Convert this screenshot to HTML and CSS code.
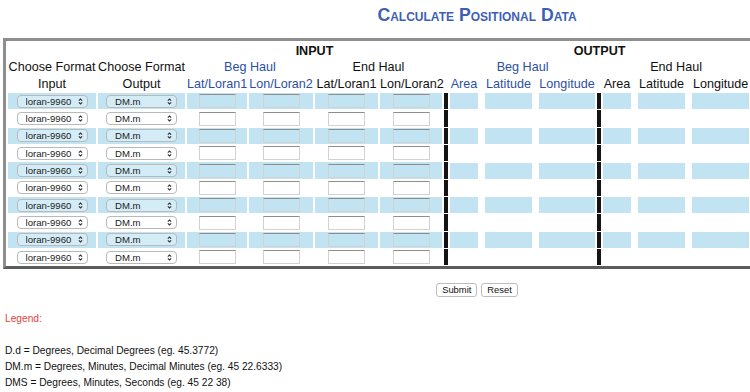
FILE: index.html
```html
<!DOCTYPE html>
<html>
<head>
<meta charset="utf-8">
<title>Calculate Positional Data</title>
<link rel="stylesheet" href="styles.css">
</head>
<body>
<div class="page">
  <h1 class="title">Calculate Positional Data</h1>
  <form class="calc">
    <table class="grid">
      <colgroup>
        <col class="w-fmt1"><col class="w-fmt2"><col class="w-c3"><col class="w-c4"><col class="w-c5"><col class="w-c6">
        <col class="w-bar">
        <col class="w-area"><col class="w-lat"><col class="w-lon1">
        <col class="w-bar">
        <col class="w-area"><col class="w-lat"><col class="w-lon2">
      </colgroup>
      <thead>
        <tr class="hrow">
          <th colspan="2"></th>
          <th colspan="4" class="grp">INPUT</th>
          <th></th>
          <th colspan="7" class="grp">OUTPUT</th>
        </tr>
        <tr class="hrow">
          <th rowspan="2" class="fmt">Choose Format<br>Input</th>
          <th rowspan="2" class="fmt">Choose Format<br>Output</th>
          <th colspan="2" class="blue">Beg Haul</th>
          <th colspan="2">End Haul</th>
          <th></th>
          <th colspan="3" class="blue">Beg Haul</th>
          <th></th>
          <th colspan="3">End Haul</th>
        </tr>
        <tr class="hrow">
          <th class="blue">Lat/Loran1</th>
          <th class="blue">Lon/Loran2</th>
          <th>Lat/Loran1</th>
          <th>Lon/Loran2</th>
          <th></th>
          <th class="blue pr">Area</th>
          <th class="blue pr">Latitude</th>
          <th class="blue">Longitude</th>
          <th></th>
          <th class="pr">Area</th>
          <th class="pr">Latitude</th>
          <th>Longitude</th>
        </tr>
      </thead>
      <tbody>
        <tr class="drow alt">
          <td class="in"><span class="sel"><select><option>loran-9960</option></select><svg class="arr" viewBox="0 0 6 10"><path d="M1 4 L3 2 L5 4 M1 6 L3 8 L5 6"/></svg></span></td>
          <td class="in"><span class="sel"><select><option>DM.m</option></select><svg class="arr" viewBox="0 0 6 10"><path d="M1 4 L3 2 L5 4 M1 6 L3 8 L5 6"/></svg></span></td>
          <td class="in"><input type="text" class="txt"></td>
          <td class="in"><input type="text" class="txt"></td>
          <td class="in"><input type="text" class="txt"></td>
          <td class="in"><input type="text" class="txt"></td>
          <td class="bar"></td>
          <td class="o pr"><div class="ob"></div></td><td class="o pr"><div class="ob"></div></td><td class="o"><div class="ob"></div></td>
          <td class="bar"></td>
          <td class="o pr"><div class="ob"></div></td><td class="o pr"><div class="ob"></div></td><td class="o"><div class="ob"></div></td>
        </tr>
        <tr class="drow">
          <td class="in"><span class="sel"><select><option>loran-9960</option></select><svg class="arr" viewBox="0 0 6 10"><path d="M1 4 L3 2 L5 4 M1 6 L3 8 L5 6"/></svg></span></td>
          <td class="in"><span class="sel"><select><option>DM.m</option></select><svg class="arr" viewBox="0 0 6 10"><path d="M1 4 L3 2 L5 4 M1 6 L3 8 L5 6"/></svg></span></td>
          <td class="in"><input type="text" class="txt"></td>
          <td class="in"><input type="text" class="txt"></td>
          <td class="in"><input type="text" class="txt"></td>
          <td class="in"><input type="text" class="txt"></td>
          <td class="bar"></td>
          <td class="o pr"><div class="ob"></div></td><td class="o pr"><div class="ob"></div></td><td class="o"><div class="ob"></div></td>
          <td class="bar"></td>
          <td class="o pr"><div class="ob"></div></td><td class="o pr"><div class="ob"></div></td><td class="o"><div class="ob"></div></td>
        </tr>
        <tr class="drow alt">
          <td class="in"><span class="sel"><select><option>loran-9960</option></select><svg class="arr" viewBox="0 0 6 10"><path d="M1 4 L3 2 L5 4 M1 6 L3 8 L5 6"/></svg></span></td>
          <td class="in"><span class="sel"><select><option>DM.m</option></select><svg class="arr" viewBox="0 0 6 10"><path d="M1 4 L3 2 L5 4 M1 6 L3 8 L5 6"/></svg></span></td>
          <td class="in"><input type="text" class="txt"></td>
          <td class="in"><input type="text" class="txt"></td>
          <td class="in"><input type="text" class="txt"></td>
          <td class="in"><input type="text" class="txt"></td>
          <td class="bar"></td>
          <td class="o pr"><div class="ob"></div></td><td class="o pr"><div class="ob"></div></td><td class="o"><div class="ob"></div></td>
          <td class="bar"></td>
          <td class="o pr"><div class="ob"></div></td><td class="o pr"><div class="ob"></div></td><td class="o"><div class="ob"></div></td>
        </tr>
        <tr class="drow">
          <td class="in"><span class="sel"><select><option>loran-9960</option></select><svg class="arr" viewBox="0 0 6 10"><path d="M1 4 L3 2 L5 4 M1 6 L3 8 L5 6"/></svg></span></td>
          <td class="in"><span class="sel"><select><option>DM.m</option></select><svg class="arr" viewBox="0 0 6 10"><path d="M1 4 L3 2 L5 4 M1 6 L3 8 L5 6"/></svg></span></td>
          <td class="in"><input type="text" class="txt"></td>
          <td class="in"><input type="text" class="txt"></td>
          <td class="in"><input type="text" class="txt"></td>
          <td class="in"><input type="text" class="txt"></td>
          <td class="bar"></td>
          <td class="o pr"><div class="ob"></div></td><td class="o pr"><div class="ob"></div></td><td class="o"><div class="ob"></div></td>
          <td class="bar"></td>
          <td class="o pr"><div class="ob"></div></td><td class="o pr"><div class="ob"></div></td><td class="o"><div class="ob"></div></td>
        </tr>
        <tr class="drow alt">
          <td class="in"><span class="sel"><select><option>loran-9960</option></select><svg class="arr" viewBox="0 0 6 10"><path d="M1 4 L3 2 L5 4 M1 6 L3 8 L5 6"/></svg></span></td>
          <td class="in"><span class="sel"><select><option>DM.m</option></select><svg class="arr" viewBox="0 0 6 10"><path d="M1 4 L3 2 L5 4 M1 6 L3 8 L5 6"/></svg></span></td>
          <td class="in"><input type="text" class="txt"></td>
          <td class="in"><input type="text" class="txt"></td>
          <td class="in"><input type="text" class="txt"></td>
          <td class="in"><input type="text" class="txt"></td>
          <td class="bar"></td>
          <td class="o pr"><div class="ob"></div></td><td class="o pr"><div class="ob"></div></td><td class="o"><div class="ob"></div></td>
          <td class="bar"></td>
          <td class="o pr"><div class="ob"></div></td><td class="o pr"><div class="ob"></div></td><td class="o"><div class="ob"></div></td>
        </tr>
        <tr class="drow">
          <td class="in"><span class="sel"><select><option>loran-9960</option></select><svg class="arr" viewBox="0 0 6 10"><path d="M1 4 L3 2 L5 4 M1 6 L3 8 L5 6"/></svg></span></td>
          <td class="in"><span class="sel"><select><option>DM.m</option></select><svg class="arr" viewBox="0 0 6 10"><path d="M1 4 L3 2 L5 4 M1 6 L3 8 L5 6"/></svg></span></td>
          <td class="in"><input type="text" class="txt"></td>
          <td class="in"><input type="text" class="txt"></td>
          <td class="in"><input type="text" class="txt"></td>
          <td class="in"><input type="text" class="txt"></td>
          <td class="bar"></td>
          <td class="o pr"><div class="ob"></div></td><td class="o pr"><div class="ob"></div></td><td class="o"><div class="ob"></div></td>
          <td class="bar"></td>
          <td class="o pr"><div class="ob"></div></td><td class="o pr"><div class="ob"></div></td><td class="o"><div class="ob"></div></td>
        </tr>
        <tr class="drow alt">
          <td class="in"><span class="sel"><select><option>loran-9960</option></select><svg class="arr" viewBox="0 0 6 10"><path d="M1 4 L3 2 L5 4 M1 6 L3 8 L5 6"/></svg></span></td>
          <td class="in"><span class="sel"><select><option>DM.m</option></select><svg class="arr" viewBox="0 0 6 10"><path d="M1 4 L3 2 L5 4 M1 6 L3 8 L5 6"/></svg></span></td>
          <td class="in"><input type="text" class="txt"></td>
          <td class="in"><input type="text" class="txt"></td>
          <td class="in"><input type="text" class="txt"></td>
          <td class="in"><input type="text" class="txt"></td>
          <td class="bar"></td>
          <td class="o pr"><div class="ob"></div></td><td class="o pr"><div class="ob"></div></td><td class="o"><div class="ob"></div></td>
          <td class="bar"></td>
          <td class="o pr"><div class="ob"></div></td><td class="o pr"><div class="ob"></div></td><td class="o"><div class="ob"></div></td>
        </tr>
        <tr class="drow">
          <td class="in"><span class="sel"><select><option>loran-9960</option></select><svg class="arr" viewBox="0 0 6 10"><path d="M1 4 L3 2 L5 4 M1 6 L3 8 L5 6"/></svg></span></td>
          <td class="in"><span class="sel"><select><option>DM.m</option></select><svg class="arr" viewBox="0 0 6 10"><path d="M1 4 L3 2 L5 4 M1 6 L3 8 L5 6"/></svg></span></td>
          <td class="in"><input type="text" class="txt"></td>
          <td class="in"><input type="text" class="txt"></td>
          <td class="in"><input type="text" class="txt"></td>
          <td class="in"><input type="text" class="txt"></td>
          <td class="bar"></td>
          <td class="o pr"><div class="ob"></div></td><td class="o pr"><div class="ob"></div></td><td class="o"><div class="ob"></div></td>
          <td class="bar"></td>
          <td class="o pr"><div class="ob"></div></td><td class="o pr"><div class="ob"></div></td><td class="o"><div class="ob"></div></td>
        </tr>
        <tr class="drow alt">
          <td class="in"><span class="sel"><select><option>loran-9960</option></select><svg class="arr" viewBox="0 0 6 10"><path d="M1 4 L3 2 L5 4 M1 6 L3 8 L5 6"/></svg></span></td>
          <td class="in"><span class="sel"><select><option>DM.m</option></select><svg class="arr" viewBox="0 0 6 10"><path d="M1 4 L3 2 L5 4 M1 6 L3 8 L5 6"/></svg></span></td>
          <td class="in"><input type="text" class="txt"></td>
          <td class="in"><input type="text" class="txt"></td>
          <td class="in"><input type="text" class="txt"></td>
          <td class="in"><input type="text" class="txt"></td>
          <td class="bar"></td>
          <td class="o pr"><div class="ob"></div></td><td class="o pr"><div class="ob"></div></td><td class="o"><div class="ob"></div></td>
          <td class="bar"></td>
          <td class="o pr"><div class="ob"></div></td><td class="o pr"><div class="ob"></div></td><td class="o"><div class="ob"></div></td>
        </tr>
        <tr class="drow">
          <td class="in"><span class="sel"><select><option>loran-9960</option></select><svg class="arr" viewBox="0 0 6 10"><path d="M1 4 L3 2 L5 4 M1 6 L3 8 L5 6"/></svg></span></td>
          <td class="in"><span class="sel"><select><option>DM.m</option></select><svg class="arr" viewBox="0 0 6 10"><path d="M1 4 L3 2 L5 4 M1 6 L3 8 L5 6"/></svg></span></td>
          <td class="in"><input type="text" class="txt"></td>
          <td class="in"><input type="text" class="txt"></td>
          <td class="in"><input type="text" class="txt"></td>
          <td class="in"><input type="text" class="txt"></td>
          <td class="bar"></td>
          <td class="o pr"><div class="ob"></div></td><td class="o pr"><div class="ob"></div></td><td class="o"><div class="ob"></div></td>
          <td class="bar"></td>
          <td class="o pr"><div class="ob"></div></td><td class="o pr"><div class="ob"></div></td><td class="o"><div class="ob"></div></td>
        </tr>
      </tbody>
    </table>
    <div class="actions">
      <button type="button" class="btn">Submit</button><button type="reset" class="btn">Reset</button>
    </div>
  </form>
  <div class="legend">
    <p class="legend-title">Legend:</p>
    <p class="legend-line legend-first">D.d = Degrees, Decimal Degrees (eg. 45.3772)</p>
    <p class="legend-line">DM.m = Degrees, Minutes, Decimal Minutes (eg. 45 22.6333)</p>
    <p class="legend-line">DMS = Degrees, Minutes, Seconds (eg. 45 22 38)</p>
  </div>
</div>
</body>
</html>
```

FILE: styles.css
```css
html, body {
  margin: 0;
  padding: 0;
  background: #ffffff;
  overflow: hidden;
}
*, *::before, *::after { box-sizing: border-box; }

.page {
  width: 954px;
  font-family: "Liberation Sans", Arial, sans-serif;
  color: #111;
}

.title {
  margin: 0;
  padding-top: 4px;
  height: 38px;
  text-align: center;
  font-size: 17.7px;
  line-height: 22px;
  font-weight: bold;
  font-variant: small-caps;
  color: #3d5fb3;
}

.calc { margin: 0; }

.grid {
  margin-left: 3px;
  width: 751px;
  table-layout: fixed;
  border-collapse: separate;
  border-spacing: 2px 1px;
  border-style: solid;
  border-width: 3px;
  border-color: #8e8e8e #5c5c5c #5c5c5c #8e8e8e;
}

.w-fmt1 { width: 88px; }
.w-fmt2 { width: 87px; }
.w-c3 { width: 60px; }
.w-c4 { width: 64px; }
.w-c5 { width: 63px; }
.w-c6 { width: 62px; }
.w-bar { width: 4px; }
.w-area { width: 33px; }
.w-lat { width: 52px; }
.w-lon1 { width: 56px; }
.w-lon2 { width: 57px; }

.grid th, .grid td {
  padding: 0;
}

.hrow th {
  height: 16px;
  font-size: 12.6px;
  line-height: 16px;
  font-weight: normal;
  text-align: center;
  white-space: nowrap;
  color: #111;
}
.hrow:first-child th { padding-top: 2px; line-height: 14px; }
.hrow th.grp { font-weight: bold; }
.hrow th.fmt { line-height: 16.5px; }
.hrow th.blue { color: #2d4fa3; }
.grid .pr { padding-right: 5px; }

.drow td {
  height: 16.35px;
  font-size: 0;
  line-height: 0;
  text-align: center;
  vertical-align: middle;
}
.drow.alt td.in { background: #c2e4f2; }
.drow td.bar { background: #141414; }
.ob { height: 16px; }
.drow.alt .ob { background: #c2e4f2; }

.sel {
  position: relative;
  display: inline-block;
  width: 71px;
  height: 13px;
  vertical-align: middle;
}
.sel select {
  -webkit-appearance: none;
  appearance: none;
  display: block;
  width: 71px;
  height: 13px;
  margin: 0;
  padding: 0 0 0 8px;
  border: 1px solid #b9b9b9;
  border-radius: 4px;
  background: rgba(255, 255, 255, 0.3);
  font-family: "Liberation Sans", Arial, sans-serif;
  font-size: 9.6px;
  line-height: 11px;
  color: #222;
}
.arr {
  position: absolute;
  right: 5px;
  top: 2px;
  width: 5px;
  height: 9px;
  fill: none;
  stroke: #333;
  stroke-width: 1.3;
}

.txt {
  display: inline-block;
  width: 37px;
  height: 14px;
  margin: 0;
  padding: 0;
  vertical-align: middle;
  border: 1px solid #d2d2d2;
  border-top-color: #8d8d8d;
  background: transparent;
}
.drow:not(.alt) .txt { background: #fff; }

.actions {
  width: 954px;
  padding-top: 14px;
  height: 42px;
  text-align: center;
  font-size: 0;
}
.btn {
  display: inline-block;
  height: 14px;
  margin: 0 2px;
  padding: 0 5px;
  border: 1px solid #bdbdbd;
  border-radius: 3px;
  background: #fff;
  font-family: "Liberation Sans", Arial, sans-serif;
  font-size: 9.4px;
  line-height: 12px;
  color: #111;
  vertical-align: top;
}

.legend {
  padding-left: 5px;
  font-size: 10.2px;
  line-height: 16px;
}
.legend p { margin: 0; }
.legend-title { color: #e5433b; }
.legend-first { margin-top: 16px !important; }
```
